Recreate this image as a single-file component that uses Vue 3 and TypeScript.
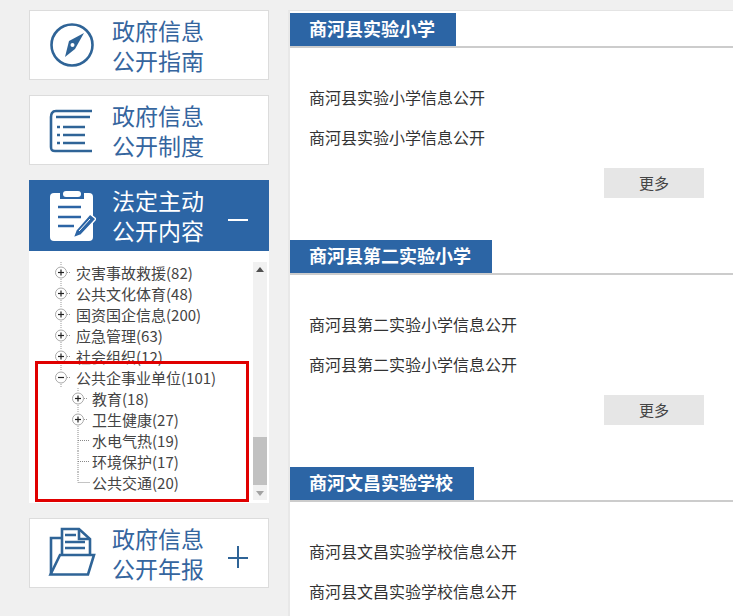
<template>
  <div class="page">
    <aside class="side">
      <template v-for="card in cards" :key="card.lines[0] + card.lines[1]">
        <a class="card" :class="{ active: card.active }">
          <svg class="card-icon" viewBox="0 0 48 52" width="48" height="52" aria-hidden="true">
            <g v-if="card.icon === 'compass'" fill="none" stroke="currentColor">
              <circle cx="24" cy="26" r="20.5" stroke-width="2.6" />
              <path d="M36 14 L27 30 L17 38 L21 22 Z" fill="currentColor" stroke="none" />
              <circle cx="24.5" cy="26" r="2" fill="#fff" stroke="none" />
            </g>
            <g v-else-if="card.icon === 'list'" fill="none" stroke="currentColor" stroke-width="2.6">
              <path d="M44 7 H8 C4 7 3 10 3 13 V43 C3 46 4 47 7 47 H44" />
              <path d="M8 13 H42" />
              <path d="M15 23 H37 M15 31 H37 M15 39 H37" />
              <path d="M9 23 H12 M9 31 H12 M9 39 H12" />
            </g>
            <g v-else-if="card.icon === 'clip'">
              <rect x="2" y="3" width="43" height="48" rx="4" fill="#fff" />
              <rect x="12" y="0" width="24" height="9" fill="#2c65a5" />
              <rect x="15" y="1" width="18" height="6" rx="3" fill="#fff" />
              <path d="M10 17 H33 M10 27 H33 M10 36 H26" stroke="#2c65a5" stroke-width="2.6" fill="none" />
              <path d="M42 24 L48 29 L33 45 L25 48 L28 40 Z" fill="#2c65a5" stroke="#fff" stroke-width="1.5" />
              <path d="M31 41 L42 29" stroke="#fff" stroke-width="1" />
            </g>
            <g v-else fill="none" stroke="currentColor" stroke-width="2.6">
              <path d="M14 28 V2 H31 L42 12 V28" />
              <path d="M31 2 V12 H42" />
              <path d="M17 8 H28 M17 15 H37 M17 21 H37" />
              <path d="M14 11 H3 V47" />
              <path d="M2.5 47.5 L12 28 H46 L40 47.5 Z" />
            </g>
          </svg>
          <span class="card-title">{{ card.lines[0] }}<br />{{ card.lines[1] }}</span>
          <span v-if="card.sign === 'minus'" class="sign minus"></span>
          <span v-if="card.sign === 'plus'" class="sign plus"></span>
        </a>

        <div v-if="card.active" class="tree-wrap">
          <ul class="tree">
            <li v-for="node in treeRows" :key="node.label" class="row" :class="'lv' + node.level">
              <svg v-if="node.kind !== 'leaf'" class="node" viewBox="0 0 20 21" width="20" height="21" aria-hidden="true">
                <path d="M8 0 V4 M8 17 V21 M14 10.5 H17" stroke="#999" stroke-dasharray="1 1" fill="none" />
                <circle cx="8" cy="10.5" r="5.5" fill="#fff" stroke="#aaa" />
                <path d="M5 10.5 H11" stroke="#222" stroke-width="1.2" />
                <path v-if="node.kind === 'plus'" d="M8 7.5 V13.5" stroke="#222" stroke-width="1.2" />
              </svg>
              <svg v-else class="node" viewBox="0 0 20 21" width="20" height="21" aria-hidden="true">
                <path :d="node.last ? 'M8 0 V10.5 H20' : 'M8 0 V21 M8 10.5 H20'" stroke="#888" stroke-dasharray="1 1" fill="none" />
              </svg>
              <span class="row-label">{{ node.label }}({{ node.count }})</span>
            </li>
          </ul>
          <div class="scrollbar">
            <span class="arrow up"></span>
            <span class="thumb"></span>
            <span class="arrow down"></span>
          </div>
          <div class="mark"></div>
        </div>
      </template>
    </aside>

    <main class="content">
      <section v-for="s in schools" :key="s.name" class="school">
        <div class="school-head"><h2>{{ s.name }}</h2></div>
        <div class="school-body">
          <p>{{ s.item }}</p>
          <p>{{ s.item }}</p>
          <a class="more">更多</a>
        </div>
      </section>
    </main>
  </div>
</template>

<script setup lang="ts">
interface Card { icon: string; lines: [string, string]; active?: boolean; sign?: 'plus' | 'minus' }
interface TreeRow { label: string; count: number; level: number; kind: 'plus' | 'minus' | 'leaf'; last?: boolean }

const cards: Card[] = [
  { icon: 'compass', lines: ['政府信息', '公开指南'] },
  { icon: 'list', lines: ['政府信息', '公开制度'] },
  { icon: 'clip', lines: ['法定主动', '公开内容'], active: true, sign: 'minus' },
  { icon: 'folder', lines: ['政府信息', '公开年报'], sign: 'plus' },
]

const treeRows: TreeRow[] = [
  { label: '灾害事故救援', count: 82, level: 1, kind: 'plus' },
  { label: '公共文化体育', count: 48, level: 1, kind: 'plus' },
  { label: '国资国企信息', count: 200, level: 1, kind: 'plus' },
  { label: '应急管理', count: 63, level: 1, kind: 'plus' },
  { label: '社会组织', count: 12, level: 1, kind: 'plus' },
  { label: '公共企事业单位', count: 101, level: 1, kind: 'minus' },
  { label: '教育', count: 18, level: 2, kind: 'plus' },
  { label: '卫生健康', count: 27, level: 2, kind: 'plus' },
  { label: '水电气热', count: 19, level: 2, kind: 'leaf' },
  { label: '环境保护', count: 17, level: 2, kind: 'leaf' },
  { label: '公共交通', count: 20, level: 2, kind: 'leaf', last: true },
]

const schools = [
  { name: '商河县实验小学', item: '商河县实验小学信息公开' },
  { name: '商河县第二实验小学', item: '商河县第二实验小学信息公开' },
  { name: '商河文昌实验学校', item: '商河县文昌实验学校信息公开' },
]
</script>

<style>
html, body { margin: 0; height: 100%; overflow: hidden; background: #f0f0f0; }
</style>

<style scoped>
.page {
  display: flex;
  gap: 19px;
  height: 616px;
  padding: 10px 0 0 29px;
  box-sizing: border-box;
  overflow: hidden;
  font-family: "Noto Sans CJK SC", "Liberation Sans", sans-serif;
  color: #333;
}

.side { width: 240px; flex: none; }

.card {
  display: flex;
  align-items: center;
  position: relative;
  height: 70px;
  margin-bottom: 15px;
  box-sizing: border-box;
  background: #fff;
  border: 1px solid #dcdcdc;
  color: #2f6497;
}
.card.active {
  height: 71px;
  margin-bottom: 0;
  background: #2c65a5;
  border-color: #2c65a5;
  color: #fff;
}
.card-icon { flex: none; margin-left: 18px; }
.card-title {
  margin: -1px 0 0 16px;
  font-size: 23px;
  line-height: 30px;
  color: #35659e;
}
.active .card-title { color: #fff; }

.sign { position: absolute; left: 198px; top: 38px; width: 20px; height: 2px; background: currentColor; }
.sign.plus::after {
  content: "";
  position: absolute;
  left: 9px;
  top: -11px;
  width: 2px;
  height: 22px;
  background: currentColor;
}

.tree-wrap {
  display: flex;
  position: relative;
  height: 252px;
  margin-bottom: 15px;
  background: #fff;
}
.tree {
  flex: 1;
  margin: 0;
  padding: 11px 0 0;
  list-style: none;
  overflow: hidden;
}
.row { display: flex; align-items: center; height: 21px; font-size: 15px; line-height: 21px; color: #444; white-space: nowrap; }
.row.lv1 { padding-left: 24px; }
.row.lv2 { padding-left: 41px; }
.node { flex: none; margin-right: 3px; }
.lv2 .node { margin-right: 2px; }

.scrollbar {
  display: flex;
  flex-direction: column;
  justify-content: flex-end;
  position: relative;
  flex: none;
  width: 14px;
  height: 238px;
  margin: 11px 2px 0 0;
  background: #f1f1f1;
}
.thumb { display: block; height: 48px; margin: 0 0 15px; background: #c1c1c1; }
.arrow { position: absolute; left: 3px; width: 0; height: 0; border-left: 4px solid transparent; border-right: 4px solid transparent; }
.arrow.up { top: 5px; border-bottom: 5px solid #505050; }
.arrow.down { bottom: 4px; border-top: 5px solid #a3a3a3; }

.mark {
  position: absolute;
  left: 6px;
  top: 110px;
  width: 214px;
  height: 141px;
  box-sizing: border-box;
  border: 3px solid #e00000;
}

.content {
  flex: 1;
  min-width: 0;
  padding-top: 2px;
  background: #fff;
  border-top: 1px solid #e4e4e4;
  border-left: 2px solid #e8e8e8;
}
.school { height: 227px; }
.school-head { border-bottom: 2px solid #ccc; }
.school-head h2 {
  display: inline-block;
  vertical-align: top;
  margin: 0;
  padding: 0 21px 2px 19px;
  font-size: 18px;
  font-weight: 700;
  line-height: 31px;
  color: #fff;
  background: #2c65a5;
}
.school-body { padding: 29px 29px 0 19px; }
.school-body p { margin: 0; font-size: 16px; line-height: 40px; color: #333; }
.more {
  display: block;
  width: 100px;
  height: 30px;
  margin: 11px 0 0 auto;
  font-size: 15px;
  line-height: 30px;
  text-align: center;
  color: #444;
  background: #e6e6e6;
}
</style>
